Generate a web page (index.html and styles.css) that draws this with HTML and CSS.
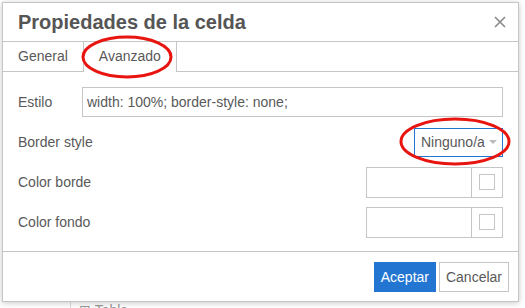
FILE: index.html
```html
<!DOCTYPE html>
<html lang="es">
<head>
  <meta charset="UTF-8" />
  <title>Propiedades de la celda</title>
  <link rel="stylesheet" href="styles.css">
</head>
<body>
  <div class="dialog">
    <div class="dialog-head">
      <span class="dialog-title">Propiedades de la celda</span>
      <button class="close" aria-label="Cerrar">
        <svg width="12" height="12" viewBox="0 0 12 12">
          <path d="M1 1 L11 11 M11 1 L1 11" stroke="#8c8c8c" stroke-width="1.7" fill="none" />
        </svg>
      </button>
    </div>
    <div class="tabs">
      <div class="tab">General</div>
      <div class="tab active">Avanzado</div>
    </div>
    <div class="dialog-body">
      <div class="row">
        <label>Estilo</label>
        <input class="text-input" type="text" value="width: 100%; border-style: none;" />
      </div>
      <div class="row">
        <label>Border style</label>
        <div class="select">Ninguno/a <span class="caret"></span></div>
      </div>
      <div class="row">
        <label>Color borde</label>
        <div class="color-field"><span class="color-text"></span><span class="swatch-cell"><span class="swatch"></span></span></div>
      </div>
      <div class="row">
        <label>Color fondo</label>
        <div class="color-field"><span class="color-text"></span><span class="swatch-cell"><span class="swatch"></span></span></div>
      </div>
    </div>
    <div class="dialog-foot">
      <button class="btn primary">Aceptar</button>
      <button class="btn">Cancelar</button>
    </div>
  </div>

  <div class="toolbar">
    <span class="sep"></span>
    <span class="tb-item">&#8862; Tabla</span>
  </div>

  <svg class="marks" width="525" height="308">
    <ellipse cx="127" cy="57" rx="44" ry="20" fill="none" stroke="#e8140f" stroke-width="3" />
    <ellipse cx="455" cy="141.5" rx="54" ry="22.5" fill="none" stroke="#e8140f" stroke-width="3" />
  </svg>
</body>
</html>
```

FILE: styles.css
```css
body {
  margin: 0;
  background: #fff;
  font-family: "Liberation Sans", Arial, sans-serif;
  font-size: 14px;
  color: #595959;
  width: 525px;
  height: 308px;
  overflow: hidden;
  position: relative;
}
.dialog {
  position: relative;
  z-index: 1;
  margin: 2px 0 0 2px;
  width: 515px;
  background: #fff;
  border: 1px solid #c5c5c5;
  box-shadow: 0 1px 6px rgba(0,0,0,0.22);
}
.dialog-head {
  height: 38px;
  display: flex;
  align-items: center;
  justify-content: space-between;
  padding: 0 12px 0 15px;
  border-bottom: 1px solid #c5c5c5;
}
.dialog-title {
  font-size: 20px;
  font-weight: bold;
  color: #555;
}
.close {
  border: 0;
  background: none;
  padding: 0;
  width: 12px;
  height: 12px;
  display: flex;
}
.tabs {
  display: flex;
  height: 29px;
  border-bottom: 1px solid #c5c5c5;
}
.tab {
  padding: 0 15px;
  line-height: 29px;
  border-right: 1px solid #c5c5c5;
}
.tab.active {
  margin-bottom: -1px;
  background: #fff;
}
.dialog-body {
  padding: 15px 15px 14px 15px;
  display: flex;
  flex-direction: column;
  gap: 10px;
}
.row {
  display: flex;
  align-items: center;
  height: 30px;
}
.row label {
  width: 64px;
  flex: none;
  white-space: nowrap;
}
.text-input {
  flex: 1;
  height: 30px;
  box-sizing: border-box;
  border: 1px solid #c5c5c5;
  padding: 0 4px;
  font: 14px "Liberation Sans", Arial, sans-serif;
  color: #595959;
  margin: 0;
}
.select {
  margin-left: auto;
  box-sizing: border-box;
  width: 89px;
  height: 29px;
  border: 1px solid #2276d2;
  display: flex;
  align-items: center;
  padding-left: 6px;
  gap: 4px;
  white-space: nowrap;
}
.caret {
  width: 0;
  height: 0;
  border-left: 4px solid transparent;
  border-right: 4px solid transparent;
  border-top: 4px solid #bbb;
}
.color-field {
  margin-left: auto;
  display: flex;
  box-sizing: border-box;
  width: 137px;
  height: 31px;
  border: 1px solid #c5c5c5;
}
.color-text {
  width: 104px;
  border-right: 1px solid #c5c5c5;
}
.swatch-cell {
  flex: 1;
  display: flex;
  align-items: center;
  justify-content: center;
}
.swatch {
  width: 14px;
  height: 14px;
  border: 1px solid #c5c5c5;
}
.dialog-foot {
  border-top: 1px solid #c5c5c5;
  padding: 10px 9px 9px 0;
  display: flex;
  justify-content: flex-end;
  gap: 3px;
}
.btn {
  height: 30px;
  padding: 0 6px;
  border: 1px solid #c5c5c5;
  background: #fff;
  color: #595959;
  font: 14px "Liberation Sans", Arial, sans-serif;
}
.btn.primary {
  background: #2276d2;
  border-color: #2276d2;
  color: #fff;
}
.toolbar {
  display: flex;
  align-items: center;
  margin-top: -2px;
  height: 20px;
  color: #999;
  font-size: 14px;
}
.sep {
  width: 1px;
  height: 20px;
  background: #ddd;
  margin-left: 70px;
}
.tb-item {
  margin-left: 8px;
}
.marks {
  position: absolute;
  left: 0;
  top: 0;
  z-index: 2;
  pointer-events: none;
}
```
